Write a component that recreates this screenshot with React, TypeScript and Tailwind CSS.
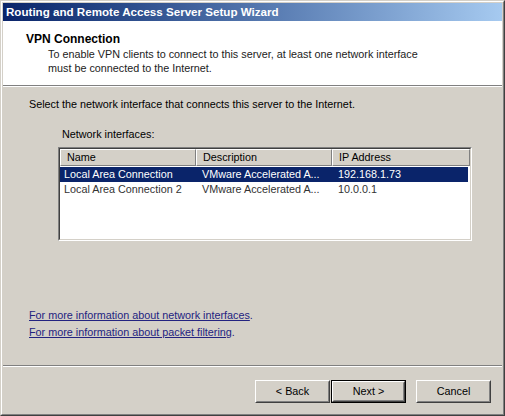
import React from "react";

const font = { fontFamily: '"Liberation Sans", Arial, sans-serif' };

function WinButton({ label, isDefault }: { label: string; isDefault?: boolean }) {
    return (
        <div className={`h-[23px] w-[75px] ${isDefault ? "border border-black" : ""}`}>
            <div className="h-full w-full border border-t-white border-l-white border-r-[#404040] border-b-[#404040] bg-[#d4d0c8]">
                <div className="h-full w-full flex items-center justify-center border border-t-[#d4d0c8] border-l-[#d4d0c8] border-r-[#808080] border-b-[#808080] text-[10.8px] text-black">
                    {label}
                </div>
            </div>
        </div>
    );
}

const rows = [
    { name: "Local Area Connection", desc: "VMware Accelerated A...", ip: "192.168.1.73", selected: true },
    { name: "Local Area Connection 2", desc: "VMware Accelerated A...", ip: "10.0.0.1", selected: false },
];

export default function App() {
    return (
        <div style={font} className="w-[505px] h-[416px] bg-[#d4d0c8] border border-t-[#d4d0c8] border-l-[#d4d0c8] border-r-[#404040] border-b-[#404040] overflow-hidden">
            <div className="h-full w-full border border-t-white border-l-white border-r-[#808080] border-b-[#808080] p-px flex flex-col">
                {/* title bar */}
                <div className="h-[18px] shrink-0 bg-gradient-to-r from-[#0a246a] to-[#a6caf0] flex items-center pl-[3px]">
                    <span className="text-white font-bold text-[11.6px]">
                        Routing and Remote Access Server Setup Wizard
                    </span>
                </div>

                {/* header */}
                <div className="h-[64px] shrink-0 bg-white pl-[23px] pt-[11px]">
                    <div className="text-[12px] font-bold text-black leading-[15px]">VPN Connection</div>
                    <div className="pl-[22px] text-[10.8px] text-[#222] leading-[14px]">
                        <div>To enable VPN clients to connect to this server, at least one network interface</div>
                        <div>must be connected to the Internet.</div>
                    </div>
                </div>
                <div className="h-px bg-[#808080] shrink-0" />
                <div className="h-px bg-white shrink-0" />

                {/* body */}
                <div className="flex-1 flex flex-col pl-[26px] pt-[10px] text-[10.8px]">
                    <div className="text-black leading-[14px]">
                        Select the network interface that connects this server to the Internet.
                    </div>
                    <div className="pl-[33px] mt-[16px] text-black leading-[14px]">Network interfaces:</div>

                    {/* list view */}
                    <div className="ml-[29px] mt-[6px] w-[414px] h-[94px] border border-t-[#808080] border-l-[#808080] border-r-white border-b-white">
                        <div className="h-full w-full border border-t-[#404040] border-l-[#404040] border-r-[#d4d0c8] border-b-[#d4d0c8] bg-white flex flex-col">
                            <div className="flex h-[17px] shrink-0 text-black">
                                {[
                                    ["Name", "w-[136px]"],
                                    ["Description", "w-[136px]"],
                                    ["IP Address", "w-[138px]"],
                                ].map(([h, w]) => (
                                    <div key={h} className={`${w} bg-[#d4d0c8] border border-t-white border-l-white border-r-[#808080] border-b-[#808080] flex items-center pl-[6px]`}>
                                        {h}
                                    </div>
                                ))}
                            </div>
                            <div className="pt-px">
                                {rows.map((r) => (
                                    <div
                                        key={r.name}
                                        className={`flex h-[15px] items-center mr-[2px] ${r.selected ? "bg-[#0a246a] text-white" : "text-[#333]"}`}
                                    >
                                        <div className="w-[136px] pl-[4px]">{r.name}</div>
                                        <div className="w-[136px] pl-[6px]">{r.desc}</div>
                                        <div className="pl-[6px]">{r.ip}</div>
                                    </div>
                                ))}
                            </div>
                        </div>
                    </div>

                    <div className="mt-auto mb-[26px] flex flex-col gap-[3px] leading-[14px] text-[#232380]">
                        <div>
                            <span className="underline">For more information about network interfaces</span>.
                        </div>
                        <div>
                            <span className="underline">For more information about packet filtering</span>.
                        </div>
                    </div>
                </div>

                <div className="h-px bg-[#808080] shrink-0" />
                <div className="h-px bg-white shrink-0" />

                {/* buttons */}
                <div className="h-[46px] shrink-0 flex items-start justify-end pt-[13px] pr-[11px]">
                    <WinButton label="< Back" />
                    <div className="ml-px">
                        <WinButton label="Next >" isDefault />
                    </div>
                    <div className="ml-[10px]">
                        <WinButton label="Cancel" />
                    </div>
                </div>
            </div>
        </div>
    );
}
